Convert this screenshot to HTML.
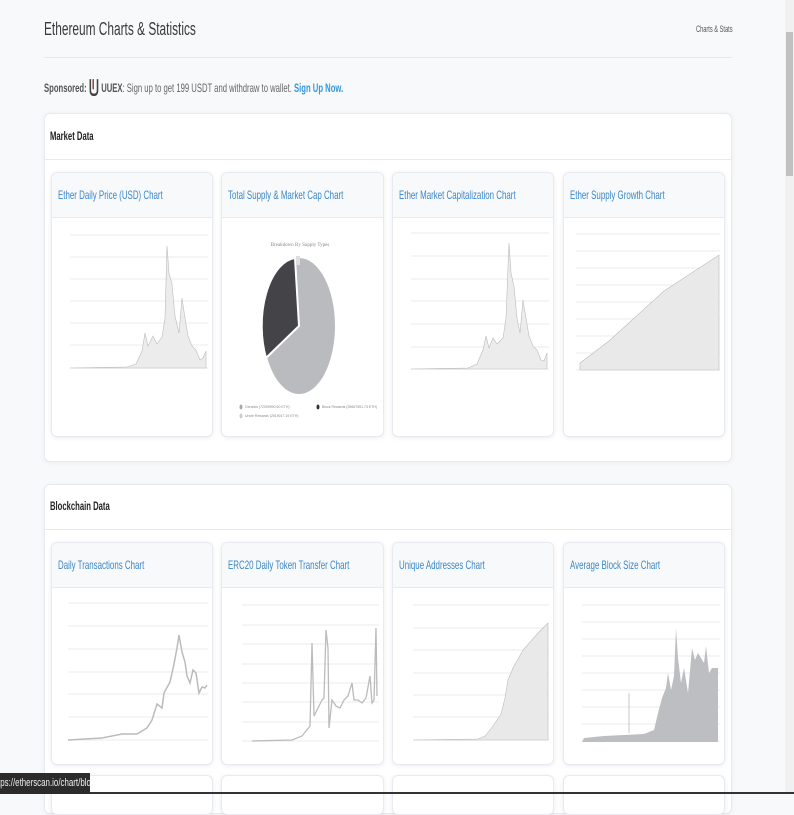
<!DOCTYPE html>
<html><head><meta charset="utf-8"><style>
*{box-sizing:border-box;margin:0;padding:0}
body{width:794px;height:794px;overflow:hidden;background:#f8f9fa;font-family:"Liberation Sans",sans-serif;position:relative;color:#333}
.abs{position:absolute}
.title{left:44px;top:19px;font-size:18px;color:#3a3a3a;white-space:nowrap;transform:scaleX(0.66);transform-origin:left}
.crumb{left:696px;top:24px;font-size:9px;color:#555;white-space:nowrap;transform:scaleX(0.63);transform-origin:left}
.hr{left:44px;top:57px;width:688px;height:1px;background:#e6e8eb}
.spon{left:44px;top:78px;font-size:12px;color:#666;white-space:nowrap;transform:scaleX(0.64);transform-origin:left}
.spon b{color:#555}
.spon a{color:#3498db;font-weight:bold;text-decoration:none}
.card{background:#fff;border:1px solid #e7eaf3;border-radius:6px;box-shadow:0 1px 6px rgba(0,0,0,0.05)}
.chead{font-size:12px;font-weight:bold;color:#222;white-space:nowrap;transform:scaleX(0.64);transform-origin:left}
.sub{background:#fff;border:1px solid #e7eaf3;border-radius:6px;box-shadow:0 1px 5px rgba(0,0,0,0.08);overflow:hidden}
.sub .h{height:45px;background:#f8f9fa;border-bottom:1px solid #e7eaf3;padding:15px 0 0 6px;font-size:12px;color:#3a87c8;white-space:nowrap}
.sub .h span{display:inline-block;transform:scaleX(0.66);transform-origin:left}
.sub svg{display:block}
</style></head><body>
<div class="abs title">Ethereum Charts &amp; Statistics</div>
<div class="abs crumb">Charts &amp; Stats</div>
<div class="abs hr"></div>
<div class="abs spon"><b>Sponsored:</b> <svg width="16" height="18" viewBox="0 0 14 16" style="vertical-align:-4px"><path d="M2 1v10q0 4 5 4q5 0 5-4V1" fill="none" stroke="#444" stroke-width="2.2"/><path d="M6 1v9" stroke="#8b3a3a" stroke-width="2"/></svg> <b>UUEX</b>: Sign up to get 199 USDT and withdraw to wallet. <a>Sign Up Now.</a></div>

<div class="abs card" style="left:44px;top:113px;width:688px;height:349px"></div>
<div class="abs" style="left:44px;top:159px;width:688px;height:1px;background:#e7eaf3"></div>
<div class="abs chead" style="left:50px;top:129px">Market Data</div>

<div class="abs card" style="left:44px;top:484px;width:688px;height:330px"></div>
<div class="abs" style="left:44px;top:529px;width:688px;height:1px;background:#e7eaf3"></div>
<div class="abs chead" style="left:50px;top:499px">Blockchain Data</div>

<!-- row 1 -->
<div class="abs sub" style="left:51px;top:172px;width:162px;height:265px"><div class="h"><span>Ether Daily Price (USD) Chart</span></div>
<svg width="162" height="220"><g stroke="#e4e4e4" stroke-width="0.8"><line x1="18" x2="156" y1="17" y2="17"/><line x1="18" x2="156" y1="39" y2="39"/><line x1="18" x2="156" y1="61" y2="61"/><line x1="18" x2="156" y1="83" y2="83"/><line x1="18" x2="156" y1="105" y2="105"/><line x1="18" x2="156" y1="127" y2="127"/><line x1="18" x2="156" y1="150" y2="150"/></g>
<polygon points="18,150 75,149 84,146 90,133 93,115 96,128 101,118 105,126 110,119 113,100 115,28 117,55 120,66 123,98 127,115 130,80 133,100 136,118 140,128 144,132 148,142 151,140 154,133 154,150" fill="#ececed" stroke="#bbb" stroke-width="0.6"/></svg></div>

<div class="abs sub" style="left:221px;top:172px;width:163px;height:265px"><div class="h"><span>Total Supply &amp; Market Cap Chart</span></div>
<svg width="163" height="220"><text x="78" y="28" font-size="5" fill="#888" text-anchor="middle" font-family="Liberation Serif">Breakdown By Supply Types</text>
<ellipse cx="77" cy="108" rx="36" ry="68" fill="#babbbf"/>
<path d="M77,108 L44,140 A36,68 0 0 1 73,40 Z" fill="#434348" stroke="#fff" stroke-width="2"/>
<rect x="74" y="38" width="4" height="9" fill="#ddd"/>
<ellipse cx="19" cy="189" rx="1.5" ry="2.5" fill="#aaa"/><text x="23" y="190" font-size="3.5" fill="#888">Genesis (72009990.50 ETH)</text>
<ellipse cx="96" cy="189" rx="1.5" ry="2.5" fill="#333"/><text x="100" y="190" font-size="3.5" fill="#888">Block Rewards (39667551.73 ETH)</text>
<ellipse cx="19" cy="198" rx="1.5" ry="2.5" fill="#ccc"/><text x="23" y="199" font-size="3.5" fill="#888">Uncle Rewards (2519017.19 ETH)</text></svg></div>

<div class="abs sub" style="left:392px;top:172px;width:162px;height:265px"><div class="h"><span>Ether Market Capitalization Chart</span></div>
<svg width="162" height="220"><g stroke="#e4e4e4" stroke-width="0.8"><line x1="18" x2="156" y1="15" y2="15"/><line x1="18" x2="156" y1="38" y2="38"/><line x1="18" x2="156" y1="61" y2="61"/><line x1="18" x2="156" y1="83" y2="83"/><line x1="18" x2="156" y1="106" y2="106"/><line x1="18" x2="156" y1="129" y2="129"/><line x1="18" x2="156" y1="151" y2="151"/></g>
<polygon points="18,151 75,150 84,146 90,132 93,118 96,130 100,120 104,126 110,120 113,100 116,25 118,55 121,68 124,100 127,115 130,82 133,100 136,118 140,128 144,132 148,142 151,143 154,135 154,151" fill="#ececed" stroke="#bbb" stroke-width="0.6"/></svg></div>

<div class="abs sub" style="left:563px;top:172px;width:162px;height:265px"><div class="h"><span>Ether Supply Growth Chart</span></div>
<svg width="162" height="220"><g stroke="#e4e4e4" stroke-width="0.8"><line x1="12" x2="156" y1="16" y2="16"/><line x1="12" x2="156" y1="33" y2="33"/><line x1="12" x2="156" y1="50" y2="50"/><line x1="12" x2="156" y1="67" y2="67"/><line x1="12" x2="156" y1="84" y2="84"/><line x1="12" x2="156" y1="101" y2="101"/><line x1="12" x2="156" y1="118" y2="118"/><line x1="12" x2="156" y1="135" y2="135"/><line x1="12" x2="156" y1="152" y2="152"/></g>
<polygon points="16,145 45,123 100,73 155,37 155,152 16,152" fill="#e9e9ea" stroke="#bbb" stroke-width="0.6"/></svg></div>

<!-- row 2 -->
<div class="abs sub" style="left:51px;top:542px;width:162px;height:223px"><div class="h"><span>Daily Transactions Chart</span></div>
<svg width="162" height="180"><g stroke="#e4e4e4" stroke-width="0.8"><line x1="16" x2="156" y1="15" y2="15"/><line x1="16" x2="156" y1="38" y2="38"/><line x1="16" x2="156" y1="61" y2="61"/><line x1="16" x2="156" y1="84" y2="84"/><line x1="16" x2="156" y1="106" y2="106"/><line x1="16" x2="156" y1="129" y2="129"/><line x1="16" x2="156" y1="152" y2="152"/></g>
<polyline points="16,152 50,150 70,146 85,146 95,140 100,132 105,116 110,120 112,105 118,94 122,76 125,60 127,47 130,64 133,74 135,88 138,95 141,82 144,85 147,105 150,99 153,100 155,97" fill="none" stroke="#bbb" stroke-width="1.5"/></svg></div>

<div class="abs sub" style="left:221px;top:542px;width:163px;height:223px"><div class="h"><span>ERC20 Daily Token Transfer Chart</span></div>
<svg width="163" height="180"><g stroke="#e4e4e4" stroke-width="0.8"><line x1="20" x2="157" y1="17" y2="17"/><line x1="20" x2="157" y1="37" y2="37"/><line x1="20" x2="157" y1="56" y2="56"/><line x1="20" x2="157" y1="76" y2="76"/><line x1="20" x2="157" y1="95" y2="95"/><line x1="20" x2="157" y1="114" y2="114"/><line x1="20" x2="157" y1="134" y2="134"/><line x1="20" x2="157" y1="153" y2="153"/></g>
<polyline points="30,153 70,152 80,148 88,138 90,55 92,128 96,120 100,112 102,110 104,42 106,60 107,140 110,112 114,118 118,120 122,112 126,108 130,95 132,112 136,112 140,115 144,110 148,88 150,115 152,112 154,40 155,108" fill="none" stroke="#bbb" stroke-width="1.3"/></svg></div>

<div class="abs sub" style="left:392px;top:542px;width:162px;height:223px"><div class="h"><span>Unique Addresses Chart</span></div>
<svg width="162" height="180"><g stroke="#e4e4e4" stroke-width="0.8"><line x1="20" x2="156" y1="17" y2="17"/><line x1="20" x2="156" y1="40" y2="40"/><line x1="20" x2="156" y1="62" y2="62"/><line x1="20" x2="156" y1="85" y2="85"/><line x1="20" x2="156" y1="107" y2="107"/><line x1="20" x2="156" y1="129" y2="129"/><line x1="20" x2="156" y1="152" y2="152"/></g>
<polygon points="20,152 85,151 92,148 100,138 108,126 112,110 115,92 120,80 130,62 145,45 155,35 155,152" fill="#e9e9ea" stroke="#bbb" stroke-width="0.6"/></svg></div>

<div class="abs sub" style="left:563px;top:542px;width:162px;height:223px"><div class="h"><span>Average Block Size Chart</span></div>
<svg width="162" height="180"><g stroke="#e4e4e4" stroke-width="0.8"><line x1="18" x2="156" y1="17" y2="17"/><line x1="18" x2="156" y1="34" y2="34"/><line x1="18" x2="156" y1="51" y2="51"/><line x1="18" x2="156" y1="68" y2="68"/><line x1="18" x2="156" y1="85" y2="85"/><line x1="18" x2="156" y1="102" y2="102"/><line x1="18" x2="156" y1="119" y2="119"/><line x1="18" x2="156" y1="136" y2="136"/><line x1="18" x2="156" y1="153" y2="153"/></g>
<polygon points="18,154 20,150 40,148 60,147 80,146 90,142 94,125 98,110 102,100 104,85 107,102 110,88 112,40 114,70 117,95 120,80 124,105 128,60 131,72 134,65 137,70 140,75 142,58 145,85 148,80 152,80 154,80 154,154" fill="#bdbec2"/>
<line x1="65" x2="65" y1="145" y2="105" stroke="#bbb" stroke-width="0.8"/></svg></div>

<!-- row 3 tops -->
<div class="abs sub" style="left:51px;top:775px;width:162px;height:40px"></div>
<div class="abs sub" style="left:221px;top:775px;width:163px;height:40px"></div>
<div class="abs sub" style="left:392px;top:775px;width:162px;height:40px"></div>
<div class="abs sub" style="left:563px;top:775px;width:162px;height:40px"></div>

<!-- scrollbar -->
<div class="abs" style="left:785px;top:0;width:9px;height:794px;background:#f1f1f1"></div>
<div class="abs" style="left:786px;top:32px;width:7px;height:144px;background:#c1c1c1"></div>
<div class="abs" style="left:0;top:792px;width:794px;height:2px;background:#333"></div>
<div class="abs" style="left:0;top:773px;width:90px;height:21px;background:#2b2b2b;color:#eee;font-size:11px;padding:4px 2px;white-space:nowrap;overflow:hidden"><span style="display:inline-block;transform:scaleX(0.72);transform-origin:left;margin-left:-4px">tps://etherscan.io/chart/blocksize</span></div>
</body></html>
